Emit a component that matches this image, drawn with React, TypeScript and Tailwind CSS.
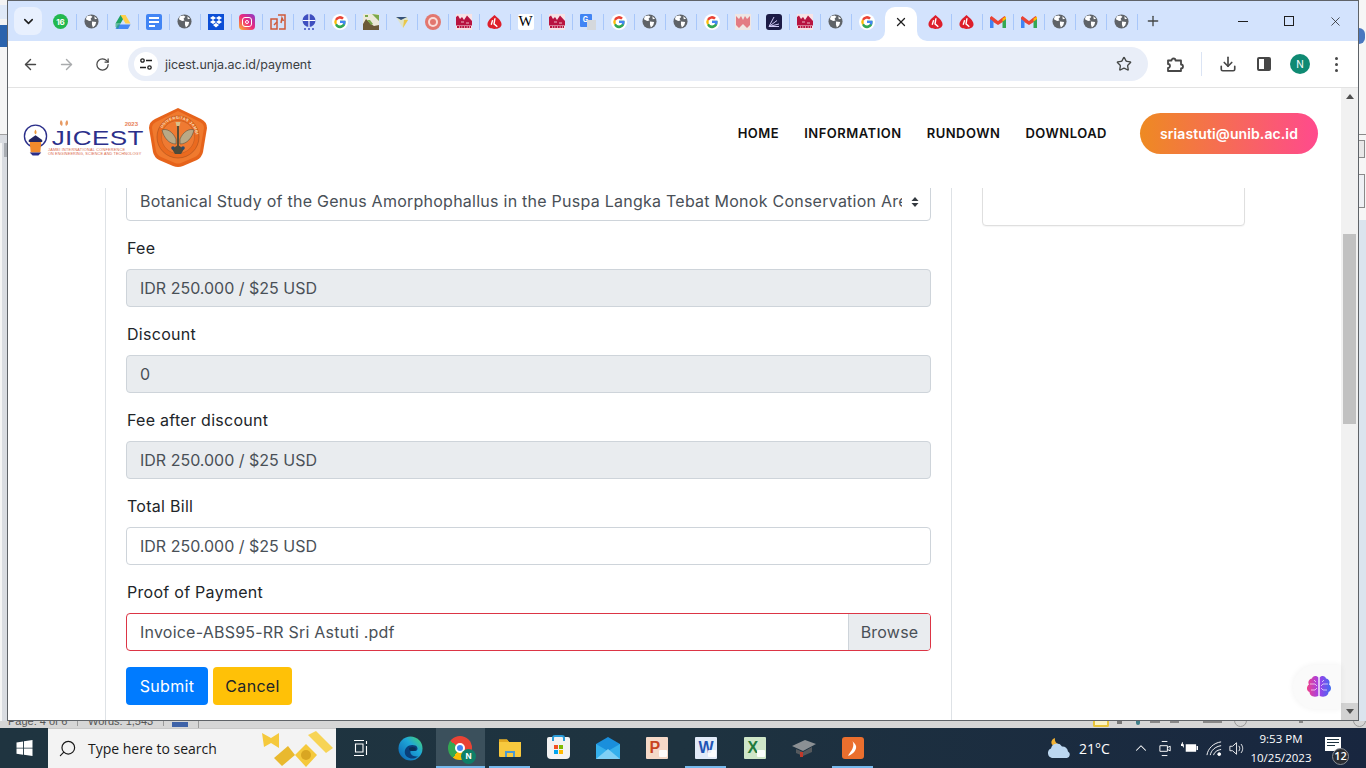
import { ChevronDown, X, Plus, ArrowLeft, ArrowRight, RotateCw, Star, Download, ChevronUp, Search } from "lucide-react";
import type { JSX } from "react";

const Globe = () => (
  <svg viewBox="0 0 16 16" className="h-[15px] w-[15px]">
    <circle cx="8" cy="8" r="7.5" fill="#5f6368" />
    <path d="M3 2.5 7 1.5 9 3 7 5 8 7 5.500 7.500 2 5.500ZM8.500 8 13 8.500 12 12 9.500 14.500 8.500 11.500ZM11 2.500 14 5 11.500 5.500Z" fill="#fff" />
  </svg>
);

const GoogleG = () => (
  <svg viewBox="0 0 16 16" className="h-4 w-4">
    <circle cx="8" cy="8" r="8" fill="#fff" />
    <path d="M8 6.700v2.400h3.300A3.400 3.400 0 0 1 4.900 9.400L3 10.800A5.500 5.500 0 0 0 13.500 8c0-.4 0-.9-.1-1.300Z" fill="#34a853" />
    <path d="M11.600 9.100H8V6.700h5.400c.3 1.400 0 3-1 4.200l-1.800-1.300c.5-.1.800-.3 1-.5Z" fill="#4285f4" />
    <path d="M4.900 9.400a3.400 3.400 0 0 1 0-2.800L3 5.200a5.500 5.500 0 0 0 0 5.600Z" fill="#fbbc05" />
    <path d="M3 5.200 4.900 6.600a3.400 3.400 0 0 1 5.300-1.100l1.700-1.700A5.500 5.500 0 0 0 3 5.200Z" fill="#ea4335" />
  </svg>
);

const RedPic = () => (
  <svg viewBox="0 0 16 16" className="h-4 w-4">
    <rect width="16" height="16" fill="#f7e3e6" />
    <path d="M0 3 2 1.500 4 5 6 3 8 6 11 1.500 16 7V11.500H0Z" fill="#b81440" />
    <path d="M1 13h14" stroke="#b81440" strokeWidth="2" strokeDasharray="2 .6" />
    <path d="M5 8h3M10 9h3" stroke="#f7e3e6" strokeWidth="0.800" />
  </svg>
);

const Anthurium = () => (
  <svg viewBox="0 0 16 16" className="h-4 w-[15px]">
    <path d="M8 .5C10 2.500 15.500 6 15.500 10.500c0 3.500-3.500 5-7.500 5s-7.500-1.500-7.500-5C.5 6 6 2.500 8 .5Z" fill="#dd1f2b" />
    <path d="M8.500 4 7.500 10 11 13M6 6 4.500 11" stroke="#fff" strokeWidth="1.500" fill="none" />
  </svg>
);

const Gmail = () => (
  <svg viewBox="0 0 16 14" className="h-[14px] w-4">
    <path d="M0 2.500 1.500 1 8 6 14.500 1 16 2.500V5L8 10 0 5Z" fill="#ea4335" />
    <path d="M0 4v9h3.500V6.500Z" fill="#4285f4" />
    <path d="M16 4v9h-3.500V6.500Z" fill="#34a853" />
    <path d="M12.500 3.500 16 1.500V4L12.500 6.500Z" fill="#fbbc05" />
  </svg>
);

const WhatsApp = () => (
  <div className="flex h-[15px] w-[15px] items-center justify-center rounded-full bg-[#22b84f] font-['Inter',sans-serif] text-[8px] font-bold text-white">16</div>
);

const Drive = () => (
  <svg viewBox="0 0 16 14" className="h-[14px] w-4">
    <path d="M5.500 0h5l-5 8.500H.5Z" fill="#1ea362" />
    <path d="M5.500 0h5l5 8.500h-5Z" fill="#ffd04b" />
    <path d="M3 9.500h12.500L13 14H.5Z" fill="#4688f4" />
    <path d="M.5 8.500 5.500 8.500 3 14 .5 12Z" fill="#1ea362" opacity="0.6" />
  </svg>
);

const Docs = () => (
  <div className="flex h-4 w-4 flex-col gap-[2px] rounded-[2px] bg-[#4285f4] px-[3px] py-[3px]">
    <div className="h-[2px] w-full bg-white" />
    <div className="h-[2px] w-full bg-white" />
    <div className="h-[2px] w-2/3 bg-white" />
  </div>
);

const Dropbox = () => (
  <svg viewBox="0 0 16 16" className="h-4 w-4">
    <rect width="16" height="16" fill="#0b4ed6" />
    <path d="M5 2 8 4 5 6 2 4ZM11 2 14 4 11 6 8 4ZM5 6 8 8 5 10 2 8ZM11 6 14 8 11 10 8 8ZM5 11 8 9 11 11 8 13.500Z" fill="#fff" />
  </svg>
);

const Instagram = () => (
  <div className="flex h-4 w-4 items-center justify-center rounded-[4px] bg-[linear-gradient(45deg,#fdb52a,#ee2a7b_50%,#8a3ac8)]">
    <div className="flex h-[10px] w-[10px] items-center justify-center rounded-[3px] border border-white">
      <div className="h-1 w-1 rounded-full border border-white" />
    </div>
  </div>
);

const OrangeDocs = () => (
  <svg viewBox="0 0 16 16" className="h-4 w-4" fill="none" stroke="#cf5a3a" strokeWidth="1.500">
    <path d="M1 5h6v10H1ZM8 1h7v14H9" />
    <path d="M4 11 7 8M11 9l1-5 1.500 3" />
  </svg>
);

const BlueGlobe = () => (
  <svg viewBox="0 0 16 16" className="h-4 w-4">
    <circle cx="8" cy="6.500" r="6.500" fill="#3f4fc0" />
    <path d="M1.500 6.500h13M8 0v13" stroke="#fff" strokeWidth="1.200" />
    <path d="M3 15h2M7 15h2M11 15h2" stroke="#3f4fc0" strokeWidth="1.500" />
  </svg>
);

const Thumb = () => (
  <svg viewBox="0 0 16 16" className="h-4 w-4">
    <rect width="16" height="16" fill="#ece9d8" />
    <path d="M0 16V10l3-5 5 5 3 2 5-1v5Z" fill="#6b5a38" />
    <path d="M9 0 16 7V1ZM2 1h3v2H2ZM4 6l4 5 2-1-3-4Z" fill="#7ba84a" />
  </svg>
);

const Diamond = () => (
  <svg viewBox="0 0 16 16" className="h-4 w-4">
    <path d="M2 3h11l1 3-5 8Z" fill="#dfe3c8" />
    <path d="M2 3h11L7 6Z" fill="#34517a" />
    <path d="M14 6 9 14 10 6Z" fill="#e8c64a" />
  </svg>
);

const Target = () => (
  <div className="flex h-4 w-4 items-center justify-center rounded-full bg-[#e2776f]">
    <div className="flex h-[10px] w-[10px] items-center justify-center rounded-full bg-[#f9dcd8]">
      <div className="h-[6px] w-[6px] rounded-full bg-[#e2776f]" />
    </div>
  </div>
);

const Wiki = () => (
  <div className="flex h-4 w-4 items-center justify-center rounded-[2px] bg-white font-['Liberation_Serif',serif] text-[15px] leading-none text-black">W</div>
);

const Translate = () => (
  <div className="relative h-4 w-4">
    <div className="flex h-[13px] w-[12px] items-center justify-center rounded-[1px] bg-[#4285f4] font-['Inter',sans-serif] text-[7px] font-bold text-white">G</div>
    <div className="absolute bottom-0 right-0 h-[10px] w-[9px] bg-[#d5d8dc]" />
  </div>
);

const RedBlur = () => (
  <svg viewBox="0 0 16 16" className="h-4 w-4">
    <rect width="16" height="16" fill="#efe6e4" />
    <path d="M1 2 4 5 6 2 8 6 10 2 12 5 15 2V11L12 14 8 10 4 14 1 11Z" fill="#e0606a" opacity="0.8" />
  </svg>
);

const Fan = () => (
  <svg viewBox="0 0 16 16" className="h-4 w-4">
    <rect width="16" height="16" rx="3" fill="#1c1b46" />
    <path d="M3 12.500 8 3M3 12.500 11 6.500M3 12.500 13 10M3 12.500H13" stroke="#cfc8f5" strokeWidth="1" />
  </svg>
);

const leftIcons = [WhatsApp, Globe, Drive, Docs, Globe, Dropbox, Instagram, OrangeDocs, BlueGlobe, GoogleG, Thumb, Diamond, Target, RedPic, Anthurium, Wiki, RedPic, Translate, GoogleG, Globe, Globe, GoogleG, RedBlur, Fan, RedPic, Globe, GoogleG];
const rightIcons = [Anthurium, Anthurium, Gmail, Gmail, Globe, Globe, Globe];

const PinnedTab = ({ Icon, last }: { Icon: () => JSX.Element; last: boolean }) => (
  <div className="flex h-[41px] w-[31px] shrink-0 items-center">
    <div className="flex w-[30px] justify-center">
      <Icon />
    </div>
    {!last && <div className="h-4 w-px bg-[#a8c7fa]" />}
  </div>
);

const TabStrip = () => (
  <div className="flex h-[41px] shrink-0 items-stretch border-t border-[#5f6368] bg-[#d3e3fd]">
    <div className="flex w-[37.5px] shrink-0 items-center justify-end pr-[3.5px]">
      <div className="flex h-7 w-7 items-center justify-center rounded-lg bg-[#e8f0fe]">
        <ChevronDown size={15} strokeWidth={2.5} className="text-[#1f1f1f]" />
      </div>
    </div>
    {leftIcons.map((Icon, i) => (
      <PinnedTab key={`l-${i}`} Icon={Icon} last={i === leftIcons.length - 1} />
    ))}
    <div className="relative mt-[6px] ml-[2px] flex h-[34px] w-[32px] shrink-0 items-center justify-center rounded-t-[10px] bg-white pb-[4px]">
      <X size={14} strokeWidth={2.2} className="text-[#1f1f1f]" />
      <div className="absolute bottom-0 -left-[10px] h-[10px] w-[10px] bg-white">
        <div className="h-full w-full rounded-br-[10px] bg-[#d3e3fd]" />
      </div>
      <div className="absolute bottom-0 -right-[10px] h-[10px] w-[10px] bg-white">
        <div className="h-full w-full rounded-bl-[10px] bg-[#d3e3fd]" />
      </div>
    </div>
    <div className="w-[4px] shrink-0" />
    {rightIcons.map((Icon, i) => (
      <PinnedTab key={`r-${i}`} Icon={Icon} last={false} />
    ))}
    <div className="flex w-[31px] shrink-0 items-center justify-center">
      <Plus size={16} strokeWidth={2} className="text-[#444746]" />
    </div>
    <div className="ml-auto flex shrink-0 items-start pt-[2px]">
      <div className="flex h-[36px] w-[46px] items-center justify-center">
        <div className="h-px w-[10px] bg-[#1f1f1f]" />
      </div>
      <div className="flex h-[36px] w-[46px] items-center justify-center">
        <div className="h-[10px] w-[10px] border border-[#1f1f1f]" />
      </div>
      <div className="flex h-[36px] w-[46px] items-center justify-center">
        <X size={15} strokeWidth={1.2} className="text-[#1f1f1f]" />
      </div>
    </div>
  </div>
);

const Toolbar = () => (
  <div className="flex h-[47px] shrink-0 items-center border-b border-[#e3e3e3] bg-white pl-[4px] pr-[4px]">
    <div className="flex w-[36px] justify-center">
      <ArrowLeft size={17} strokeWidth={2} className="text-[#474747]" />
    </div>
    <div className="flex w-[36px] justify-center">
      <ArrowRight size={17} strokeWidth={2} className="text-[#a9abad]" />
    </div>
    <div className="flex w-[36px] justify-center">
      <RotateCw size={15} strokeWidth={2} className="text-[#474747]" />
    </div>
    <div className="ml-[8px] flex h-[34px] w-[1020px] shrink-0 items-center rounded-full bg-[#e9eef8] pl-[6px] pr-[16px]">
      <div className="flex h-6 w-6 items-center justify-center rounded-full bg-white">
        <svg viewBox="0 0 14 14" className="h-[14px] w-[14px]" fill="none" stroke="#1f1f1f" strokeWidth="1.300">
          <circle cx="3.500" cy="3.500" r="1.700" />
          <path d="M7 3.500h6M1 10.500h6" />
          <circle cx="10.500" cy="10.500" r="1.700" />
        </svg>
      </div>
      <span className="ml-[7px] pt-[2px] font-['Inter',sans-serif] text-[12.500px] tracking-[-0.05px] text-[#3c4043]">jicest.unja.ac.id/payment</span>
      <Star size={16} strokeWidth={2} className="ml-auto text-[#444746]" />
    </div>
    <div className="ml-[16px] flex w-[22px] justify-center">
      <svg viewBox="0 0 18 18" className="h-[18px] w-[18px]" fill="none" stroke="#474747" strokeWidth="1.800">
        <path d="M2 5.500h3.500a2 2 0 0 1 4 0H15v4a2 2 0 0 1 0 4V16H2v-3a2 2 0 0 0 0-4Z" strokeLinejoin="round" />
      </svg>
    </div>
    <div className="ml-[15px] h-6 w-px bg-[#dbe4f4]" />
    <div className="ml-[15px] flex w-[22px] justify-center">
      <Download size={18} strokeWidth={2.2} className="text-[#474747]" />
    </div>
    <div className="ml-[14px] flex w-[22px] justify-center">
      <div className="flex h-[14px] w-[14px] overflow-hidden rounded-[2px] border-2 border-[#474747]">
        <div className="w-1/2" />
        <div className="w-1/2 bg-[#474747]" />
      </div>
    </div>
    <div className="ml-[15px] flex h-5 w-5 items-center justify-center rounded-full bg-[#0f8a73] font-['Inter',sans-serif] text-[10px] text-white">N</div>
    <div className="ml-[16px] flex w-5 flex-col items-center gap-[3px]">
      <div className="h-[3px] w-[3px] rounded-full bg-[#474747]" />
      <div className="h-[3px] w-[3px] rounded-full bg-[#474747]" />
      <div className="h-[3px] w-[3px] rounded-full bg-[#474747]" />
    </div>
  </div>
);

const JicestLogo = () => (
  <div className="flex items-center">
    <svg viewBox="0 0 26 34" className="mt-[3px] h-[34px] w-[25px] shrink-0">
      <circle cx="13" cy="13" r="11.500" fill="none" stroke="#2b2f8a" strokeWidth="1.400" />
      <path d="M13 6c1.500 2 1.500 4 0 5-1.500-1-1.500-3 0-5Z" fill="#ef9a3a" />
      <path d="M6 17 13 12 20 17V19H6Z" fill="#23265f" />
      <path d="M7 19H19L18 30H8Z" fill="#f08a2c" />
      <path d="M7 30H19L16 33H10Z" fill="#2b2f8a" />
    </svg>
    <div className="relative flex w-[95px] flex-col">
      <div className="flex h-[11px] items-start justify-between pl-[11px] pr-[5px] font-['Liberation_Sans',sans-serif] text-[6px] font-bold leading-[8px] text-[#e8825a]">
        <svg viewBox="0 0 10 7" className="h-[7px] w-[10px]" fill="#e79a63">
          <path d="M2 0c2 2 2 4 1 6-2-1-3-3-1-6ZM8 0c-2 2-2 4-1 6 2-1 3-3 1-6Z" />
        </svg>
        <span>2023</span>
      </div>
      <div className="-mt-[2px] h-[17px] origin-left scale-x-[1.24] whitespace-nowrap pl-[3px] font-['Liberation_Sans',sans-serif] text-[21px] leading-[17px] tracking-[0.3px] text-[#2b2f8a]">JICEST</div>
      <div className="mt-[2px] whitespace-nowrap font-['Liberation_Sans',sans-serif] text-[3.800px] leading-[4px] tracking-[0.25px] text-[#d9694a]">JAMBI INTERNATIONAL CONFERENCE</div>
      <div className="whitespace-nowrap font-['Liberation_Sans',sans-serif] text-[3.800px] leading-[4px] tracking-[0.12px] text-[#d9694a]">ON ENGINEERING, SCIENCE AND TECHNOLOGY</div>
    </div>
    <svg viewBox="0 0 60 60" className="ml-[5px] h-[60px] w-[60px] shrink-0">
      <path d="M30 0 53 11Q59 14 59 20L55 44Q54 49 49 52L35 58Q30 60 25 58L11 52Q6 49 5 44L1 20Q1 14 7 11Z" fill="#e6631b" />
      <path d="M30 3 52 14Q56 16 56 20L52 43Q51 47 47 49L33 55Q30 56 27 55L13 49Q9 47 8 43L4 20Q4 16 8 14Z" fill="#f07a2e" />
      <circle cx="30" cy="29" r="21" fill="#ea6a1f" stroke="#a9501c" strokeWidth="0.600" />
      <circle cx="30" cy="29" r="16.500" fill="#ef7a32" stroke="#a9501c" strokeWidth="0.400" />
      <path id="shieldArc" d="M12 29a18 18 0 0 1 36 0" fill="none" />
      <text fontFamily="Liberation Sans, sans-serif" fontSize="3.800" fontWeight="bold" fill="#f7e3c8" letterSpacing="0.4">
        <textPath href="#shieldArc" startOffset="9">UNIVERSITAS JAMBI</textPath>
      </text>
      <path d="M14 22C19 20 25 24 28 31L28 36C21 36 16 30 14 22ZM46 22C41 20 35 24 32 31L32 36C39 36 44 30 46 22Z" fill="#b9a986" stroke="#5c5340" strokeWidth="0.600" />
      <path d="M29 15h2v23h-2Z" fill="#5c4d34" />
      <path d="M27.500 14h5l-1 4h-3Z" fill="#d8c08a" />
      <path d="M24 41 30 37 36 41 33 46H27Z" fill="#4d4a3a" />
      <circle cx="25" cy="40" r="1.800" fill="#2b4a6a" />
      <circle cx="35" cy="40" r="1.800" fill="#2b4a6a" />
    </svg>
  </div>
);

const navLinks = ["HOME", "INFORMATION", "RUNDOWN", "DOWNLOAD"];

const SiteHeader = () => (
  <header className="flex h-[100px] shrink-0 items-center bg-white pl-[15px] pr-[23px] font-['Inter',sans-serif]">
    <JicestLogo />
    <nav className="mb-[9px] ml-auto flex items-center gap-[25px] text-[13px] font-semibold tracking-[0.5px] text-[#111]">
      {navLinks.map((link) => (
        <a key={link}>{link}</a>
      ))}
    </nav>
    <div className="mb-[10px] ml-[33px] flex h-[41px] w-[178px] items-center justify-center rounded-full bg-[linear-gradient(90deg,#ee8a22,#ff4a8d)] text-[14px] font-semibold tracking-[0.1px] text-white">
      sriastuti@unib.ac.id
    </div>
  </header>
);

const inputBase = "h-[38px] w-full rounded-[4px] border border-[#ced4da] pl-[13px] text-base text-[#495057] outline-none";

const labelClass = "mb-2 block h-6 pl-px text-base leading-[22px] tracking-[0.28px] text-[#212529]";

const Field = ({ label, value, readOnly }: { label: string; value: string; readOnly?: boolean }) => (
  <div className="mb-4">
    <label className={labelClass}>{label}</label>
    <input readOnly value={value} className={`${inputBase} pr-3 ${readOnly ? "bg-[#e9ecef]" : "bg-white"}`} />
  </div>
);

const PaymentForm = () => (
  <div className="-mt-[5px] h-[600px] w-[847px] shrink-0 border-x border-[#dee2e6] bg-white px-5 font-['Inter',sans-serif]">
    <div className="relative mb-4 h-[38px]">
      <select className={`${inputBase} appearance-none bg-white pb-[2px] pr-7 tracking-[0.25px]`} defaultValue="a">
        <option value="a">Botanical Study of the Genus Amorphophallus in the Puspa Langka Tebat Monok Conservation Area</option>
      </select>
      <svg viewBox="0 0 8 12" className="pointer-events-none absolute right-[12px] top-[13px] h-3 w-2" fill="#343a40">
        <path d="M4 1 7.500 5H.5ZM4 11 .5 7h7Z" />
      </svg>
    </div>
    <Field label="Fee" value="IDR 250.000 / $25 USD" readOnly />
    <Field label="Discount" value="0" readOnly />
    <Field label="Fee after discount" value="IDR 250.000 / $25 USD" readOnly />
    <Field label="Total Bill" value="IDR 250.000 / $25 USD" />
    <div className="mb-4">
      <label className={labelClass}>Proof of Payment</label>
      <div className="flex h-[38px] items-stretch overflow-hidden rounded-[4px] border border-[#dc3545] text-base tracking-[0.22px] text-[#495057]">
        <div className="flex flex-1 items-center pl-[13px] pr-3">Invoice-ABS95-RR Sri Astuti .pdf</div>
        <div className="flex w-[82px] items-center justify-center border-l border-[#ced4da] bg-[#e9ecef]">Browse</div>
      </div>
    </div>
    <div className="flex gap-[5px]">
      <button type="button" className="h-[38px] w-[82px] rounded-[4px] bg-[#007bff] text-base tracking-[0.3px] text-white">Submit</button>
      <button type="button" className="h-[38px] w-[79px] rounded-[4px] bg-[#ffc107] text-base tracking-[0.3px] text-[#212529]">Cancel</button>
    </div>
  </div>
);

const Scrollbar = () => (
  <div className="flex h-full w-[17px] shrink-0 flex-col items-center bg-[#f1f1f1]">
    <div className="flex h-[17px] w-full items-center justify-center">
      <div className="h-0 w-0 border-x-[4px] border-b-[5px] border-x-transparent border-b-[#505050]" />
    </div>
    <div className="mt-[129px] h-[190px] w-[13px] bg-[#c1c1c1]" />
    <div className="mt-auto flex h-[17px] w-full items-center justify-center bg-[#d2d2d2]">
      <div className="h-0 w-0 border-x-[4px] border-t-[5px] border-x-transparent border-t-[#505050]" />
    </div>
  </div>
);

const BrainButton = () => (
  <div className="absolute bottom-[11px] right-0 flex h-[44px] w-[48px] items-center justify-center rounded-l-[22px] bg-[#fafafa] pl-[3px] shadow-[0_0_6px_rgba(0,0,0,0.06)]">
    <svg viewBox="0 0 26 24" className="h-[24px] w-[26px]">
      <defs>
        <linearGradient id="brainGrad" x1="0" y1="0" x2="1" y2="0">
          <stop offset="0" stopColor="#f0408a" />
          <stop offset="0.5" stopColor="#a040e8" />
          <stop offset="1" stopColor="#3f6cf0" />
        </linearGradient>
      </defs>
      <path d="M12.300 2.500C10 0 6.500 1 6 3.500 3 4 1.500 7 3 9.500 0 11.500.5 16 3.500 17c0 3.500 4 6 8.800 4ZM13.700 2.500C16 0 19.500 1 20 3.500 23 4 24.500 7 23 9.500 26 11.500 25.500 16 22.500 17c0 3.500-4 6-8.800 4Z" fill="url(#brainGrad)" />
      <path d="M4 9h5l2 2M5 15h4l2-2M8 5l2 2M22 9h-5l-2 2M21 15h-4l-2-2M18 5l-2 2" stroke="#fff" strokeWidth="0.800" fill="none" opacity="0.8" />
    </svg>
  </div>
);

const ChromeWindow = () => (
  <div className="flex h-[721px] w-[1352px] shrink-0 flex-col border-x border-b border-[#5f6368] bg-white">
    <TabStrip />
    <Toolbar />
    <div className="flex min-h-0 flex-1">
      <div className="relative flex min-w-0 flex-1 flex-col">
        <SiteHeader />
        <div className="relative flex min-h-0 flex-1 overflow-hidden pl-[97px]">
          <PaymentForm />
          <div className="-mt-[30px] ml-[30px] h-[68px] w-[263px] shrink-0 rounded-[4px] border border-[#dfdfdf] bg-white shadow-[0_1px_1px_rgba(0,0,0,0.04)]" />
        </div>
        <BrainButton />
      </div>
      <Scrollbar />
    </div>
  </div>
);

const LeftBackdrop = () => (
  <div className="flex h-[721px] w-[7px] shrink-0 flex-col bg-[#f3f3f3]">
    <div className="mt-[5px] h-[14px] w-full bg-[#dfe9f7]" />
    <div className="mt-[6px] h-[22px] w-full bg-[#2a63ad]" />
    <div className="h-[87px] w-full bg-[#f5f5f5]" />
    <div className="h-px w-full bg-[#a0a0a0]" />
    <div className="flex flex-1 bg-[#d9dce1] pt-[8px]">
      <div className="h-full w-[2px] bg-[#f5f5f5]" />
      <div className="ml-[2px] h-[14px] w-[3px] bg-[#a9adb3]" />
    </div>
  </div>
);

const RightBackdrop = () => (
  <div className="flex h-[721px] w-[7px] shrink-0 flex-col bg-[#f6f6f6]">
    <div className="mt-[28px] h-[16px] w-[6px] rounded-r-full bg-[#4a78c0]" />
    <div className="mt-[90px] h-px w-full bg-[#8a8a8a]" />
    <div className="mt-[5px] h-[18px] w-[6px] border-y border-r border-[#8a8a8a] bg-[#e8e8e8]" />
    <div className="mt-[16px] h-[34px] w-[6px] border-y border-r border-[#8a8a8a] bg-[#eef1f5]" />
    <div className="mt-[12px] flex-1 bg-[#dbe4ee]" />
  </div>
);

const WordStatusBar = () => (
  <div className="flex h-[7px] shrink-0 items-start overflow-hidden bg-[#d6d6d6] font-['Liberation_Sans',sans-serif] text-[11px] leading-[10px] text-[#555]">
    <div className="-mt-[5px] ml-[8px] flex h-[12px] items-start whitespace-nowrap">
      <span className="w-[70px] border-r border-[#9a9a9a]">Page: 4 of 6</span>
      <span className="ml-[10px] w-[76px] border-r border-[#9a9a9a]">Words: 1,543</span>
      <span className="ml-[8px] mt-[6px] h-[5px] w-[16px] bg-[#3f63a8]" />
      <span className="ml-[10px] h-[12px] w-px bg-[#9a9a9a]" />
    </div>
    <div className="ml-[894px] h-[6px] w-[19px] rounded-b-[2px] border-x-2 border-b-2 border-[#e8c53a] bg-[#fbf3c4]" />
    <div className="ml-[8px] h-[3px] w-[6px] bg-[#777]" />
    <div className="ml-[14px] h-[4px] w-[6px] rounded-b-full bg-[#3f7f8a]" />
    <div className="ml-[10px] h-[2px] w-[12px] bg-[#888]" />
    <div className="ml-[10px] h-[2px] w-[12px] bg-[#888]" />
    <div className="ml-[24px] h-[2px] w-[24px] bg-[#888]" />
    <div className="-mt-[8px] ml-[12px] h-[14px] w-[16px] rounded-full border border-[#9a9a9a]" />
    <div className="ml-[52px] h-[2px] w-[5px] bg-[#888]" />
    <div className="-mt-[8px] ml-[50px] h-[14px] w-[16px] rounded-full border border-[#9a9a9a]" />
  </div>
);

const WindowsLogo = () => (
  <svg viewBox="0 0 18 18" className="h-4 w-[17px]" fill="#fff">
    <path d="M0 2.700 7.400 1.600V8.600H0ZM8.400 1.500 18 0V8.600H8.400ZM0 9.600H7.400V16.500L0 15.400ZM8.400 9.600H18V18L8.400 16.600Z" />
  </svg>
);

const EdgeIcon = () => (
  <svg viewBox="0 0 26 26" className="h-[25px] w-[25px]">
    <defs>
      <linearGradient id="edgeA" x1="0" y1="1" x2="1" y2="0">
        <stop offset="0" stopColor="#0b5fb0" />
        <stop offset="0.6" stopColor="#1ea7d8" />
        <stop offset="1" stopColor="#4cd964" />
      </linearGradient>
    </defs>
    <circle cx="13" cy="13" r="12.500" fill="url(#edgeA)" />
    <path d="M7 17C7 11 13 8 18 10c3 1.500 3 5 .5 5.500H13C12 19 16 22 21 21 16 26 7 23 7 17Z" fill="#0a3f7a" />
    <ellipse cx="15" cy="13.500" rx="3.500" ry="2" fill="#0a2f55" />
  </svg>
);

const ChromeIcon = () => (
  <div className="relative h-[25px] w-[25px]">
    <div className="flex h-[24px] w-[24px] items-center justify-center rounded-full bg-[conic-gradient(#ea4335_0_33%,#fbbc05_33%_40%,#fbbc05_40%_60%,#34a853_60%_85%,#ea4335_85%)]">
      <div className="h-[10px] w-[10px] rounded-full border-2 border-white bg-[#4285f4]" />
    </div>
    <div className="absolute -bottom-[3px] -right-[3px] flex h-[15px] w-[15px] items-center justify-center rounded-full bg-[#0f7f68] font-['Inter',sans-serif] text-[8px] font-bold text-white">N</div>
  </div>
);

const FolderIcon = () => (
  <svg viewBox="0 0 22 20" className="h-[20px] w-[22px]">
    <path d="M0 1.500h8l2 2.500h12v14a1 1 0 0 1-1 1H1a1 1 0 0 1-1-1Z" fill="#f8c93e" />
    <path d="M0 1.500h8l2 2.500H0Z" fill="#e3a820" />
    <path d="M6 13h10v6H6Z" fill="#4a9ad4" />
    <path d="M8 15h6v4H8Z" fill="#f8c93e" />
  </svg>
);

const StoreIcon = () => (
  <div className="relative flex h-[22px] w-[23px] items-center justify-center rounded-b-[4px] rounded-t-[2px] bg-[#f2f2f2]">
    <div className="absolute -top-[2px] h-[6px] w-[13px] rounded-t-[3px] border-x-2 border-t-2 border-[#2b9ad6]" />
    <div className="mt-[3px] grid grid-cols-2 gap-px">
      <div className="h-[4px] w-[4px] bg-[#f25022]" />
      <div className="h-[4px] w-[4px] bg-[#7fba00]" />
      <div className="h-[4px] w-[4px] bg-[#00a4ef]" />
      <div className="h-[4px] w-[4px] bg-[#ffb900]" />
    </div>
  </div>
);

const MailIcon = () => (
  <svg viewBox="0 0 24 22" className="h-[22px] w-[24px]">
    <path d="M0 7 12 0 24 7V22H0Z" fill="#1a8fdc" />
    <path d="M0 7 12 14 24 7V22H0Z" fill="#35b0ec" />
    <path d="M0 22 12 12 24 22Z" fill="#7fd0f5" />
  </svg>
);

const OfficeIcon = ({ letter, bg, color }: { letter: string; bg: string; color: string }) => (
  <div className={`relative flex h-[22px] w-[22px] items-center rounded-[1px] pl-[4px] font-['Liberation_Sans',sans-serif] text-[16px] font-bold leading-none ${bg} ${color}`}>
    {letter}
    <div className="absolute bottom-[2px] right-[1px] h-[7px] w-[8px] rounded-[1px] bg-white/90" />
  </div>
);

const CapIcon = () => (
  <svg viewBox="0 0 24 20" className="h-[20px] w-[24px]">
    <path d="M0 8 13 2 24 6 11 13Z" fill="#8b9094" />
    <path d="M4 11 11 14 20 9V14L11 18 4 15Z" fill="#55595d" />
    <path d="M8 14h3v5H8Z" fill="#c0392b" />
  </svg>
);

const FoxitIcon = () => (
  <div className="flex h-[22px] w-[22px] items-center justify-center rounded-[3px] bg-[#ea6f2e]">
    <svg viewBox="0 0 12 16" className="h-[15px] w-[11px]" fill="#fff">
      <path d="M6 0c1.500 3 1 5 0 8-1 2.500-3 4.500-5 8 4-1 9-5 9-10C10 4 8 2 6 0Z" />
    </svg>
  </div>
);

const taskbarApps = [
  { key: "folder", icon: <FolderIcon />, underline: true },
  { key: "store", icon: <StoreIcon /> },
  { key: "mail", icon: <MailIcon /> },
  { key: "ppt", icon: <OfficeIcon letter="P" bg="bg-[#f5d9c8]" color="text-[#c8431e]" /> },
  { key: "word", icon: <OfficeIcon letter="W" bg="bg-[#e2ebf8]" color="text-[#1f55b5]" />, underline: true },
  { key: "excel", icon: <OfficeIcon letter="X" bg="bg-[#cfe6c8]" color="text-[#217a3c]" /> },
  { key: "cap", icon: <CapIcon /> },
  { key: "foxit", icon: <FoxitIcon />, underline: true },
];

const TaskbarSlot = ({ children, underline }: { children: JSX.Element; underline?: boolean }) => (
  <div className="relative flex h-full w-[49px] items-center justify-center">
    {children}
    {underline && <div className="absolute bottom-0 left-[4px] right-[4px] h-[2px] bg-[#76b9ed]" />}
  </div>
);

const Taskbar = () => (
  <div className="flex h-[40px] shrink-0 items-stretch bg-[linear-gradient(90deg,#1f3440,#1e3340_50%,#18263f)] font-['Open_Sans',sans-serif] text-white">
    <div className="flex w-[48px] shrink-0 items-center justify-center">
      <WindowsLogo />
    </div>
    <div className="mr-px flex w-[288px] shrink-0 items-center overflow-hidden border-t border-[#c8c8c8] bg-[#f3f3f3] pl-[10px] text-[#1a1a1a]">
      <Search size={19} strokeWidth={1.5} className="-scale-x-100" />
      <span className="ml-[11px] text-[14px]">Type here to search</span>
      <svg viewBox="0 0 72 36" className="ml-auto mr-[2px] h-[36px] w-[72px] shrink-0" fill="#f5c93c">
        <path d="M0 2 9 7 17 2 17 17 9 12 2 16Z" />
        <path d="M12 27 26 15 33 24 20 35Z" fill="#e9b92e" />
        <path d="M33 24 44 13 55 24 44 36Z" />
        <circle cx="44" cy="24" r="5" fill="#d9a622" />
        <path d="M46 4 54 0 71 17 64 22Z" fill="#f7d455" />
      </svg>
    </div>
    <TaskbarSlot>
      <svg viewBox="0 0 16 16" className="-ml-[2px] h-4 w-4" fill="none" stroke="#fff" strokeWidth="1.100">
        <path d="M1 .5h10M1 15.500h10M2.500 4h7.500v8H2.500ZM13.500 1v3M13.500 6v9" />
      </svg>
    </TaskbarSlot>
    <TaskbarSlot>
      <EdgeIcon />
    </TaskbarSlot>
    <div className="relative ml-px flex w-[49px] items-center justify-center bg-[#3b505c]">
      <ChromeIcon />
      <div className="absolute bottom-0 left-0 right-0 h-[2px] bg-[#76b9ed]" />
    </div>
    {taskbarApps.map((app) => (
      <TaskbarSlot key={app.key} underline={app.underline}>
        {app.icon}
      </TaskbarSlot>
    ))}
    <div className="ml-auto flex items-center pr-[17px]">
      <svg viewBox="0 0 26 24" className="h-6 w-[26px]">
        <path d="M9 2c-.5 3 1 6 5 6.500C12.500 11 8 11 6 8.500 4.500 6 6 3 9 2Z" fill="#f2b234" />
        <path d="M6 22a5 5 0 0 1-1-9.500 6 6 0 0 1 11-2 5.500 5.500 0 0 1 6 5A3.500 3.500 0 0 1 21 22Z" fill="#bcd7f0" />
      </svg>
      <span className="ml-[7px] w-[31px] whitespace-nowrap text-[14px]">21°C</span>
      <ChevronUp size={18} strokeWidth={1.4} className="ml-[22px]" />
      <svg viewBox="0 0 16 18" className="ml-[8px] h-[17px] w-[15px]" fill="none" stroke="#fff" strokeWidth="1">
        <path d="M4 1.500h6M4 16.500h6M2 6h8v6H2ZM10 8l3-1.500v5L10 10" />
      </svg>
      <svg viewBox="0 0 18 12" className="ml-[8px] h-3 w-[17px]" fill="#fff">
        <path d="M0 1v3h1.500l1.500 2V2H2V0H1v2ZM5 2h11v8H5ZM16.500 4H18v4h-1.500Z" />
      </svg>
      <svg viewBox="0 0 18 18" className="ml-[8px] h-[17px] w-[17px]" fill="none" stroke="#fff" strokeWidth="1">
        <path d="M1 16C2 9 8 3 16 2M4.500 16c1-5 5-9 11.500-10M8 16c1-3 3-5 8-6" />
        <circle cx="14" cy="15" r="1.500" fill="#fff" />
      </svg>
      <svg viewBox="0 0 18 16" className="ml-[6px] h-[15px] w-[16px]" fill="none" stroke="#fff" strokeWidth="1">
        <path d="M1 5.500h3L8.500 1.500v13L4 10.500H1ZM11 5c1.500 2 1.500 4 0 6M13.500 3c2.500 3 2.500 7 0 10" />
      </svg>
      <div className="ml-[3px] flex w-[66px] flex-col items-center text-[11.500px] leading-[19px]">
        <span>9:53 PM</span>
        <span className="whitespace-nowrap">10/25/2023</span>
      </div>
      <div className="relative ml-[11px] h-[24px] w-[24px]">
        <div className="mt-[1px] flex h-[14px] w-4 flex-col gap-[2px] bg-white px-[2px] py-[2px]">
          <div className="h-px w-full bg-[#1e3340]" />
          <div className="h-px w-full bg-[#1e3340]" />
          <div className="h-px w-2/3 bg-[#1e3340]" />
        </div>
        <div className="absolute -bottom-[5px] right-0 flex h-[17px] w-[17px] items-center justify-center rounded-full border border-[#8a8f96] bg-[#2a2d33] text-[11px] font-semibold">12</div>
      </div>
    </div>
  </div>
);

export default function App() {
  return (
    <div className="flex h-[768px] w-[1366px] flex-col overflow-hidden bg-[#d8d8d8]">
      <div className="flex h-[721px] shrink-0 items-start">
        <LeftBackdrop />
        <ChromeWindow />
        <RightBackdrop />
      </div>
      <WordStatusBar />
      <Taskbar />
    </div>
  );
}
